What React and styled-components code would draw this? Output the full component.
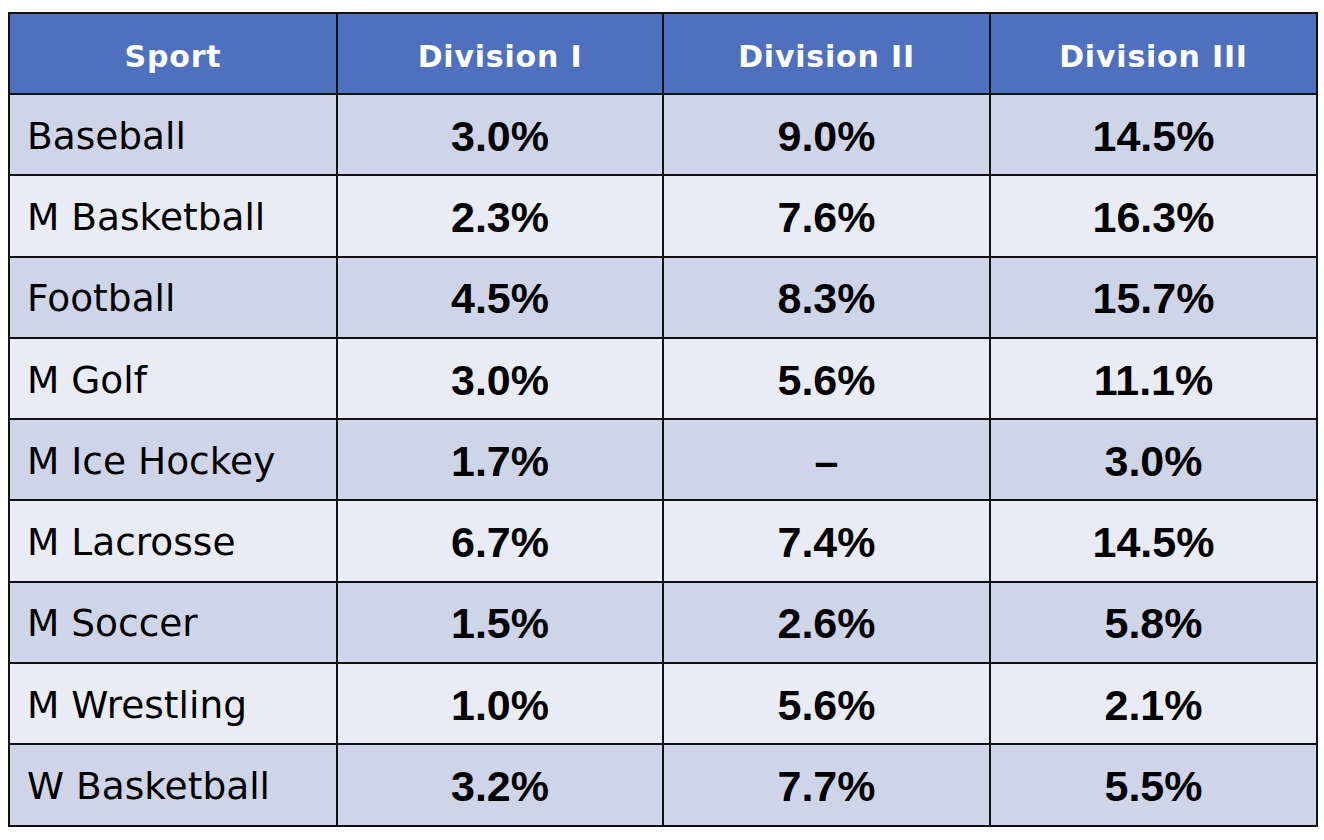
import styled, { createGlobalStyle } from "styled-components";

const rows = [
  ["Baseball", "3.0%", "9.0%", "14.5%"],
  ["M Basketball", "2.3%", "7.6%", "16.3%"],
  ["Football", "4.5%", "8.3%", "15.7%"],
  ["M Golf", "3.0%", "5.6%", "11.1%"],
  ["M Ice Hockey", "1.7%", "–", "3.0%"],
  ["M Lacrosse", "6.7%", "7.4%", "14.5%"],
  ["M Soccer", "1.5%", "2.6%", "5.8%"],
  ["M Wrestling", "1.0%", "5.6%", "2.1%"],
  ["W Basketball", "3.2%", "7.7%", "5.5%"],
];

export default function App() {
  return (
    <>
      <GlobalStyle />
      <Table>
        <colgroup>
          <col style={{ width: 328 }} />
          <col style={{ width: 326 }} />
          <col style={{ width: 327 }} />
          <col style={{ width: 327 }} />
        </colgroup>
        <thead>
          <tr>
            <HeadCell>Sport</HeadCell>
            <HeadCell>Division I</HeadCell>
            <HeadCell>Division II</HeadCell>
            <HeadCell>Division III</HeadCell>
          </tr>
        </thead>
        <tbody>
          {rows.map((row, i) => (
            <Row key={row[0]} $band={i % 2 === 0}>
              <SportCell>{row[0]}</SportCell>
              <ValueCell>{row[1]}</ValueCell>
              <ValueCell>{row[2]}</ValueCell>
              <ValueCell>{row[3]}</ValueCell>
            </Row>
          ))}
        </tbody>
      </Table>
    </>
  );
}

const GlobalStyle = createGlobalStyle`
  body {
    margin: 0;
    padding: 12px 8px;
    background: #ffffff;
    font-family: "DejaVu Sans", sans-serif;
  }
  td, th {
    box-sizing: border-box;
  }
`;

const Table = styled.table`
  width: 1309px;
  border-collapse: collapse;
  table-layout: fixed;
  border: 2px solid #111;
`;

const HeadCell = styled.th`
  height: 81px;
  padding: 7px 0 0;
  background: #4f70be;
  color: #ffffff;
  font-family: "DejaVu Sans", sans-serif;
  font-size: 30px;
  line-height: 36px;
  font-weight: 700;
  letter-spacing: 0.8px;
  text-align: center;
  vertical-align: middle;
  border: 2px solid #111;
`;

const Row = styled.tr`
  background: ${({ $band }) => ($band ? "#cfd5e8" : "#e9ebf5")};
`;

const SportCell = styled.td`
  height: 81.3px;
  padding: 2px 0 0 17px;
  font-family: "DejaVu Sans", sans-serif;
  font-size: 37.5px;
  line-height: 44px;
  font-weight: 400;
  color: #000;
  border: 2px solid #111;
  vertical-align: middle;
`;

const ValueCell = styled.td`
  height: 81.3px;
  padding: 2px 0 0;
  font-family: "Liberation Sans", Arial, sans-serif;
  font-size: 43px;
  line-height: 48px;
  font-weight: 700;
  color: #000;
  text-align: center;
  border: 2px solid #111;
  vertical-align: middle;
`;
